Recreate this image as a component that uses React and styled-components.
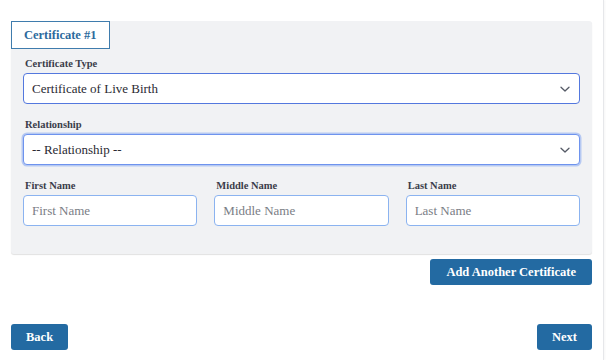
import React from 'react';
import styled, { createGlobalStyle } from 'styled-components';

const GlobalStyle = createGlobalStyle`
  body {
    margin: 0;
    background: #fff;
    font-family: "Liberation Serif", Georgia, serif;
  }
`;

const Page = styled.div`
  width: 604px;
  height: 360px;
  box-sizing: border-box;
  border-right: 1px solid #e6e7ea;
  box-shadow: 1px 0 2px rgba(0, 0, 0, 0.04);
  padding: 21px 11px 0 11px;
  display: flex;
  flex-direction: column;
`;

const Panel = styled.div`
  background: #f1f2f4;
  border-radius: 3px;
  box-shadow: 0 1px 1px rgba(0, 0, 0, 0.12);
  height: 233px;
  box-sizing: border-box;
  display: flex;
  flex-direction: column;
  align-items: flex-start;
`;

const Tab = styled.div`
  height: 28px;
  box-sizing: border-box;
  padding: 0 12px;
  display: flex;
  align-items: center;
  background: #fff;
  border: 1px solid #3f7cad;
  color: #2d6a9d;
  font-weight: bold;
  font-size: 12.5px;
`;

const Body = styled.div`
  align-self: stretch;
  padding: 9px 12px 0 12px;
  display: flex;
  flex-direction: column;
`;

const Field = styled.div`
  display: flex;
  flex-direction: column;
  margin-bottom: ${p => p.$mb || 0}px;
  min-width: 0;
`;

const Label = styled.label`
  font-size: 10.5px;
  font-weight: bold;
  color: #3b3d4a;
  padding-left: 2px;
  height: 15px;
  line-height: 12px;
`;

const SelectBox = styled.div`
  height: 31px;
  box-sizing: border-box;
  background: #fff;
  border: 1px solid ${p => (p.$focus ? '#6e93ee' : '#5478de')};
  box-shadow: ${p => (p.$focus ? '0 0 0 1.5px rgba(110, 150, 240, 0.45)' : 'none')};
  border-radius: 4px;
  display: flex;
  align-items: center;
  justify-content: space-between;
  padding: 0 8px 0 8px;
  font-size: 13px;
  color: #2a2a33;
`;

const Row = styled.div`
  display: grid;
  grid-template-columns: 1fr 1fr 1fr;
  gap: 17px;
`;

const Input = styled.input`
  height: 31px;
  box-sizing: border-box;
  width: 100%;
  border: 1px solid #8bb3f0;
  border-radius: 4px;
  background: #fff;
  padding: 0 8px;
  font-family: "Liberation Serif", Georgia, serif;
  font-size: 13px;
  outline: none;
  &::placeholder {
    color: #7a7d85;
  }
`;

const Button = styled.button`
  height: 26px;
  padding: 0 ${p => p.$px || 15}px;
  background: #236aa2;
  color: #fff;
  border: none;
  border-radius: 3px;
  font-family: "Liberation Serif", Georgia, serif;
  font-weight: bold;
  font-size: 12.5px;
  cursor: pointer;
`;

const ActionRow = styled.div`
  display: flex;
  justify-content: ${p => p.$justify || 'flex-end'};
  margin-top: ${p => p.$mt}px;
`;

const Chevron = () => (
  <svg width="12" height="12" viewBox="0 0 12 12" fill="none">
    <path d="M2 4.2 L6 8 L10 4.2" stroke="#555a66" strokeWidth="1.3" strokeLinecap="round" strokeLinejoin="round" />
  </svg>
);

export default function App() {
  return (
    <>
      <GlobalStyle />
      <Page>
        <Panel>
          <Tab>Certificate #1</Tab>
          <Body>
            <Field $mb={15}>
              <Label>Certificate Type</Label>
              <SelectBox>
                <span>Certificate of Live Birth</span>
                <Chevron />
              </SelectBox>
            </Field>
            <Field $mb={15}>
              <Label>Relationship</Label>
              <SelectBox $focus>
                <span>-- Relationship --</span>
                <Chevron />
              </SelectBox>
            </Field>
            <Row>
              <Field>
                <Label>First Name</Label>
                <Input placeholder="First Name" />
              </Field>
              <Field>
                <Label>Middle Name</Label>
                <Input placeholder="Middle Name" />
              </Field>
              <Field>
                <Label>Last Name</Label>
                <Input placeholder="Last Name" />
              </Field>
            </Row>
          </Body>
        </Panel>
        <ActionRow $mt={5}>
          <Button $px={16}>Add Another Certificate</Button>
        </ActionRow>
        <ActionRow $mt={39} $justify="space-between">
          <Button>Back</Button>
          <Button>Next</Button>
        </ActionRow>
      </Page>
    </>
  );
}
